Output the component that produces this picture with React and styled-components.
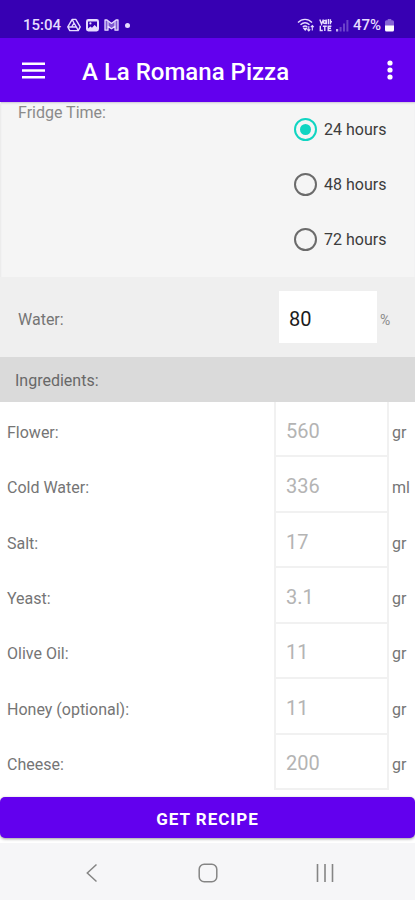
import React, { useState } from 'react'
import styled, { createGlobalStyle } from 'styled-components'

const GlobalStyle = createGlobalStyle`
  * {
    box-sizing: border-box;
  }

  body {
    margin: 0;
    background: #fff;
    color: #757575;
    font-family: Roboto, 'Liberation Sans', sans-serif;
    font-size: 16px;
    line-height: 20px;
  }

  input,
  button {
    margin: 0;
    font-family: inherit;
  }
`

const Page = styled.div`
  min-height: 100vh;
  display: flex;
  flex-direction: column;
`

const StatusBar = styled.div`
  height: 38px;
  padding: 12px 21px 0 23px;
  display: flex;
  justify-content: space-between;
  background: #3700b3;
  color: #e6dcff;
  font-size: 15px;
  font-weight: 500;
  line-height: 26px;
`

const StatusGroup = styled.div`
  display: flex;
  align-items: center;
  gap: ${({ gap }) => gap};

  svg {
    display: block;
  }
`

const AppBar = styled.header`
  height: 64px;
  padding: 0 12px;
  display: flex;
  align-items: center;
  background: #6200ee;
  color: #fff;
`

const IconButton = styled.button`
  height: 48px;
  width: ${({ width }) => width};
  padding: 0;
  border: 0;
  display: flex;
  align-items: center;
  justify-content: center;
  background: none;
  color: inherit;
`

const Title = styled.h1`
  flex: 1;
  margin: 0 0 0 28px;
  padding-top: 4px;
  font-size: 24px;
  font-weight: 500;
  line-height: 32px;
`

const FridgeSection = styled.fieldset`
  min-width: 0;
  margin: 0;
  padding: 0 0 10px 17px;
  border: 0;
  border-left: 1px solid #ececec;
  display: flex;
  justify-content: space-between;
  background: #f5f5f5;
  box-shadow: inset 0 2px 2px -1px #c9c4d4;
`

const FridgeLabel = styled.div`
  padding-top: 1px;
  color: #8a8a8a;
`

const Options = styled.div`
  width: 121px;
`

const Option = styled.label`
  height: 55px;
  display: flex;
  align-items: center;
  gap: 7px;
  color: #3c3c3c;
`

const Radio = styled.input`
  appearance: none;
  width: 23px;
  height: 23px;
  border: 2px solid #6b6b6b;
  border-radius: 50%;
  display: grid;
  place-items: center;

  &:checked {
    border-color: #10d5c2;
  }

  &:checked::before {
    content: '';
    width: 11px;
    height: 11px;
    border-radius: 50%;
    background: #10d5c2;
  }
`

const WaterSection = styled.section`
  height: 80px;
  padding: 0 0 0 18px;
  display: flex;
  align-items: center;
  background: #efefef;

  label {
    flex: 1;
    padding-top: 6px;
  }
`

const WaterInput = styled.input`
  width: 98px;
  height: 52px;
  padding: 4px 10px 0;
  border: 0;
  background: #fff;
  color: #1c1c1c;
  font-size: 20px;
`

const Percent = styled.span`
  width: 38px;
  padding: 6px 0 0 3px;
  color: #8a8a8a;
  font-size: 14px;
`

const SectionTitle = styled.h2`
  height: 45px;
  margin: 0;
  padding: 2px 15px 0;
  display: flex;
  align-items: center;
  background: #dadada;
  color: #686868;
  font-size: 16px;
  font-weight: 400;
`

const Ingredients = styled.div`
  flex: 1;
  margin-bottom: 7px;
  display: flex;
  flex-direction: column;
`

const Ingredient = styled.div`
  flex: 1;
  min-height: 54px;
  padding-left: 7px;
  display: flex;
  align-items: stretch;

  label {
    flex: 1;
    align-self: center;
    padding-top: 6px;
  }
`

const Amount = styled.input`
  width: 115px;
  padding: 4px 10px 0;
  border: 2px solid #f1f1f1;
  border-top: 0;
  background: #fff;
  color: #b4b4b4;
  font-size: 20px;
`

const Unit = styled.span`
  width: 26px;
  padding: 6px 0 0 3px;
  align-self: center;
`

const RecipeButton = styled.button`
  height: 41px;
  padding: 2px 0 0;
  border: 0;
  border-radius: 5px;
  background: #6200ee;
  box-shadow: 0 1px 3px #9a9a9a;
  color: #fff;
  font-size: 17px;
  font-weight: 700;
  letter-spacing: 1px;
`

const NavBar = styled.nav`
  height: 57px;
  margin-top: 5px;
  padding: 2px 32px 0;
  display: grid;
  grid-template-columns: repeat(3, 1fr);
  justify-items: center;
  align-items: center;
  background: #f6f6f8;
  color: #858585;
`

const ingredients = [
  { id: 'flower', name: 'Flower', amount: '560', unit: 'gr' },
  { id: 'water', name: 'Cold Water', amount: '336', unit: 'ml' },
  { id: 'salt', name: 'Salt', amount: '17', unit: 'gr' },
  { id: 'yeast', name: 'Yeast', amount: '3.1', unit: 'gr' },
  { id: 'oil', name: 'Olive Oil', amount: '11', unit: 'gr' },
  { id: 'honey', name: 'Honey (optional)', amount: '11', unit: 'gr' },
  { id: 'cheese', name: 'Cheese', amount: '200', unit: 'gr' },
]

const DriveIcon = () => (
  <svg width="14" height="14" viewBox="0 0 14 14" fill="none" stroke="currentColor">
    <path d="M5.2 1.4h3.6l4.4 7.4-2 3.8H2.8L.8 8.8z" strokeWidth="1.4" strokeLinejoin="round" />
    <path d="M7 5 4.6 9h4.8zM5.2 1.6 7 5M1 9h3.6M11.2 12.5 9.4 9" strokeWidth="1.4" />
  </svg>
)

const PhotoIcon = () => (
  <svg width="13" height="14" viewBox="0 0 13 14">
    <rect x="0" y="1" width="13" height="12.5" rx="2.4" fill="currentColor" />
    <path d="M2 3.5h9v5.8L8.6 7 6 9.8 4.4 8.4 2 10.4z" fill="#3700b3" />
    <circle cx="4.4" cy="5.4" r="1.1" fill="currentColor" />
  </svg>
)

const MailIcon = () => (
  <svg width="15" height="14" viewBox="0 0 15 14" fill="none" stroke="currentColor">
    <path
      d="M1 2v10.2h3V8.4l3.5 2.4L11 8.4v3.8h3V2h-2L7.5 5.4 3 2z"
      fill="currentColor"
      fillOpacity="0.4"
      strokeWidth="1.3"
      strokeLinejoin="round"
    />
    <path d="M4 3v5.4M11 3v5.4" strokeWidth="1.1" />
  </svg>
)

const DotIcon = () => (
  <svg width="5" height="5" viewBox="0 0 5 5">
    <circle cx="2.5" cy="2.5" r="2.5" fill="currentColor" />
  </svg>
)

const WifiIcon = () => (
  <svg width="18" height="14" viewBox="0 0 18 14" fill="none" stroke="currentColor" strokeWidth="1.4">
    <path d="M1 4.5C5 .3 11 .3 15 4.5M3.5 6.8c3-2.7 6-2.7 9 0M5.8 9c1.5-1.3 3-1.3 4.5 0" />
    <path d="M7 10.5h2.5L8.2 12z" fill="currentColor" />
    <path d="M11.8 13V8.2M10.3 11.4l1.5 1.6 1.5-1.6M15.3 7.5v5M13.8 9.1l1.5-1.6 1.5 1.6" strokeWidth="1.1" />
  </svg>
)

const VolteIcon = () => (
  <svg width="13" height="14" viewBox="0 0 13 14" fill="none" stroke="currentColor" strokeWidth="1.4">
    <path d="m.8 1.5 1.8 4.5 1.8-4.5M7.2 1.5v4.7M9.4 1v5.2M11.4 1.2v5M11.2 3.8h1.8" />
    <circle cx="5.9" cy="4" r="1.5" />
    <path d="M1.3 7.8v4.7h2.5M3.8 8.2h4M5.8 8.2v4.8M12.4 8.2H9.2v4.3h3.2M9.2 10.3h2.8" />
  </svg>
)

const SignalIcon = () => (
  <svg width="13" height="14" viewBox="0 0 13 14" fill="currentColor">
    <path d="M0 11h2.2v2.5H0z" opacity="0.8" />
    <path d="M3.6 9h2v4.5h-2zM7 5.5h2v8H7zM10.4 2h2v11.5h-2z" opacity="0.3" />
  </svg>
)

const BatteryIcon = () => (
  <svg width="9" height="14" viewBox="0 0 9 14" fill="currentColor">
    <path d="M2.7 1h3.6v1.2h1.2Q9 2.2 9 3.7V8H0V3.7q0-1.5 1.5-1.5h1.2z" opacity="0.45" />
    <path d="M0 7.5h9V12q0 1.5-1.5 1.5h-6Q0 13.5 0 12z" fill="#fff" />
  </svg>
)

const MenuIcon = () => (
  <svg width="23" height="17" viewBox="0 0 23 17" fill="currentColor">
    <path d="M0 .5h23V3H0zM0 7.2h23v2.6H0zM0 14h23v2.5H0z" />
  </svg>
)

const MoreIcon = () => (
  <svg width="6" height="20" viewBox="0 0 6 20" fill="currentColor">
    <circle cx="3" cy="3" r="2.6" />
    <circle cx="3" cy="10" r="2.6" />
    <circle cx="3" cy="17" r="2.6" />
  </svg>
)

const BackIcon = () => (
  <svg width="12" height="20" viewBox="0 0 12 20" fill="none" stroke="currentColor" strokeWidth="1.5">
    <path d="m11.5 1.5-9.2 8.5 9.2 8.5" />
  </svg>
)

const HomeIcon = () => (
  <svg width="20" height="20" viewBox="0 0 20 20" fill="none" stroke="currentColor" strokeWidth="1.5">
    <rect x="1.2" y="1.2" width="17.6" height="17.6" rx="5" />
  </svg>
)

const RecentsIcon = () => (
  <svg width="18" height="18" viewBox="0 0 18 18" fill="none" stroke="currentColor" strokeWidth="1.6">
    <path d="M1.5 0v18M9 0v18M16.5 0v18" />
  </svg>
)

const App = () => {
  const [hours, setHours] = useState(24)

  return (
    <Page>
      <GlobalStyle />
      <StatusBar>
        <StatusGroup gap="6px">
          <span>15:04</span>
          <StatusGroup gap="5px">
            <DriveIcon />
            <PhotoIcon />
            <MailIcon />
          </StatusGroup>
          <DotIcon />
        </StatusGroup>
        <StatusGroup gap="4px">
          <WifiIcon />
          <VolteIcon />
          <SignalIcon />
          <span>47%</span>
          <BatteryIcon />
        </StatusGroup>
      </StatusBar>

      <AppBar>
        <IconButton width="42px" aria-label="Menu">
          <MenuIcon />
        </IconButton>
        <Title>A La Romana Pizza</Title>
        <IconButton width="26px" aria-label="More options">
          <MoreIcon />
        </IconButton>
      </AppBar>

      <FridgeSection aria-labelledby="fridge-time">
        <FridgeLabel id="fridge-time">Fridge Time:</FridgeLabel>
        <Options>
          {[24, 48, 72].map(value => (
            <Option key={value}>
              <Radio
                type="radio"
                name="fridge"
                checked={hours === value}
                onChange={() => setHours(value)}
              />
              {value} hours
            </Option>
          ))}
        </Options>
      </FridgeSection>

      <WaterSection>
        <label htmlFor="hydration">Water:</label>
        <WaterInput id="hydration" defaultValue="80" inputMode="numeric" />
        <Percent>%</Percent>
      </WaterSection>

      <SectionTitle>Ingredients:</SectionTitle>
      <Ingredients>
        {ingredients.map(({ id, name, amount, unit }) => (
          <Ingredient key={id}>
            <label htmlFor={id}>{name}:</label>
            <Amount id={id} value={amount} readOnly />
            <Unit>{unit}</Unit>
          </Ingredient>
        ))}
      </Ingredients>

      <RecipeButton>GET RECIPE</RecipeButton>

      <NavBar>
        <IconButton width="48px" aria-label="Back">
          <BackIcon />
        </IconButton>
        <IconButton width="48px" aria-label="Home">
          <HomeIcon />
        </IconButton>
        <IconButton width="48px" aria-label="Recent apps">
          <RecentsIcon />
        </IconButton>
      </NavBar>
    </Page>
  )
}

export default App
